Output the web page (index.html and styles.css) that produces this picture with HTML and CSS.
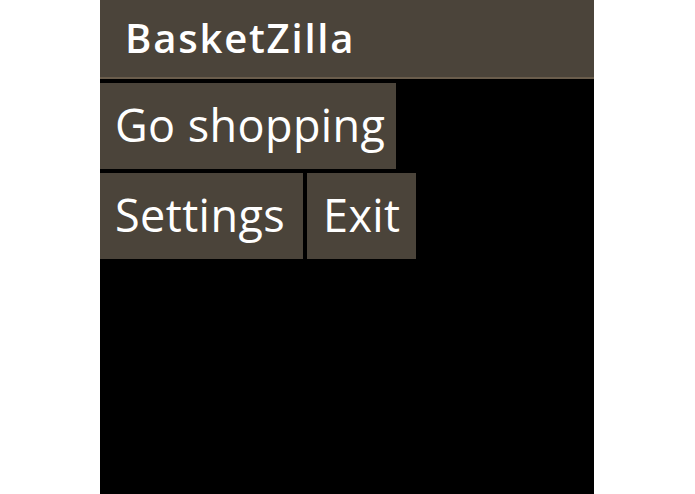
FILE: index.html
```html
<!DOCTYPE html>
<html>
<head>
<meta charset="utf-8">
<link rel="stylesheet" href="styles.css">
</head>
<body>
<div class="screen">
  <div class="header">BasketZilla</div>
  <div class="rows">
    <div class="row"><div class="btn btn-shop">Go shopping</div></div>
    <div class="row"><div class="btn btn-settings">Settings</div><div class="btn btn-exit">Exit</div></div>
  </div>
</div>
</body>
</html>
```
FILE: styles.css
```css
html, body { margin: 0; padding: 0; background: #ffffff; }
body { font-family: "Open Sans", "DejaVu Sans", sans-serif; }
.screen {
  margin-left: 100px;
  width: 494px;
  height: 494px;
  background: #000;
  overflow: hidden;
}
.header {
  height: 77px;
  background: #4b443a;
  border-bottom: 2px solid #6a5d4c;
  color: #fff;
  font-size: 40px;
  font-weight: 600;
  letter-spacing: 1.8px;
  line-height: 76px;
  padding-left: 25px;
  box-sizing: content-box;
}
.rows { display: flex; flex-direction: column; gap: 4px; padding-top: 4px; }
.row { display: flex; gap: 4px; }
.btn {
  background: #4b443a;
  color: #fff;
  height: 86px;
  line-height: 84px;
  font-size: 45px;
  letter-spacing: 0.4px;
  padding: 0 15px;
  box-sizing: border-box;
  white-space: nowrap;
}
.btn-shop { width: 296px; }
.btn-settings { width: 203px; }
.btn-exit { width: 109px; padding-left: 16px; }
```
